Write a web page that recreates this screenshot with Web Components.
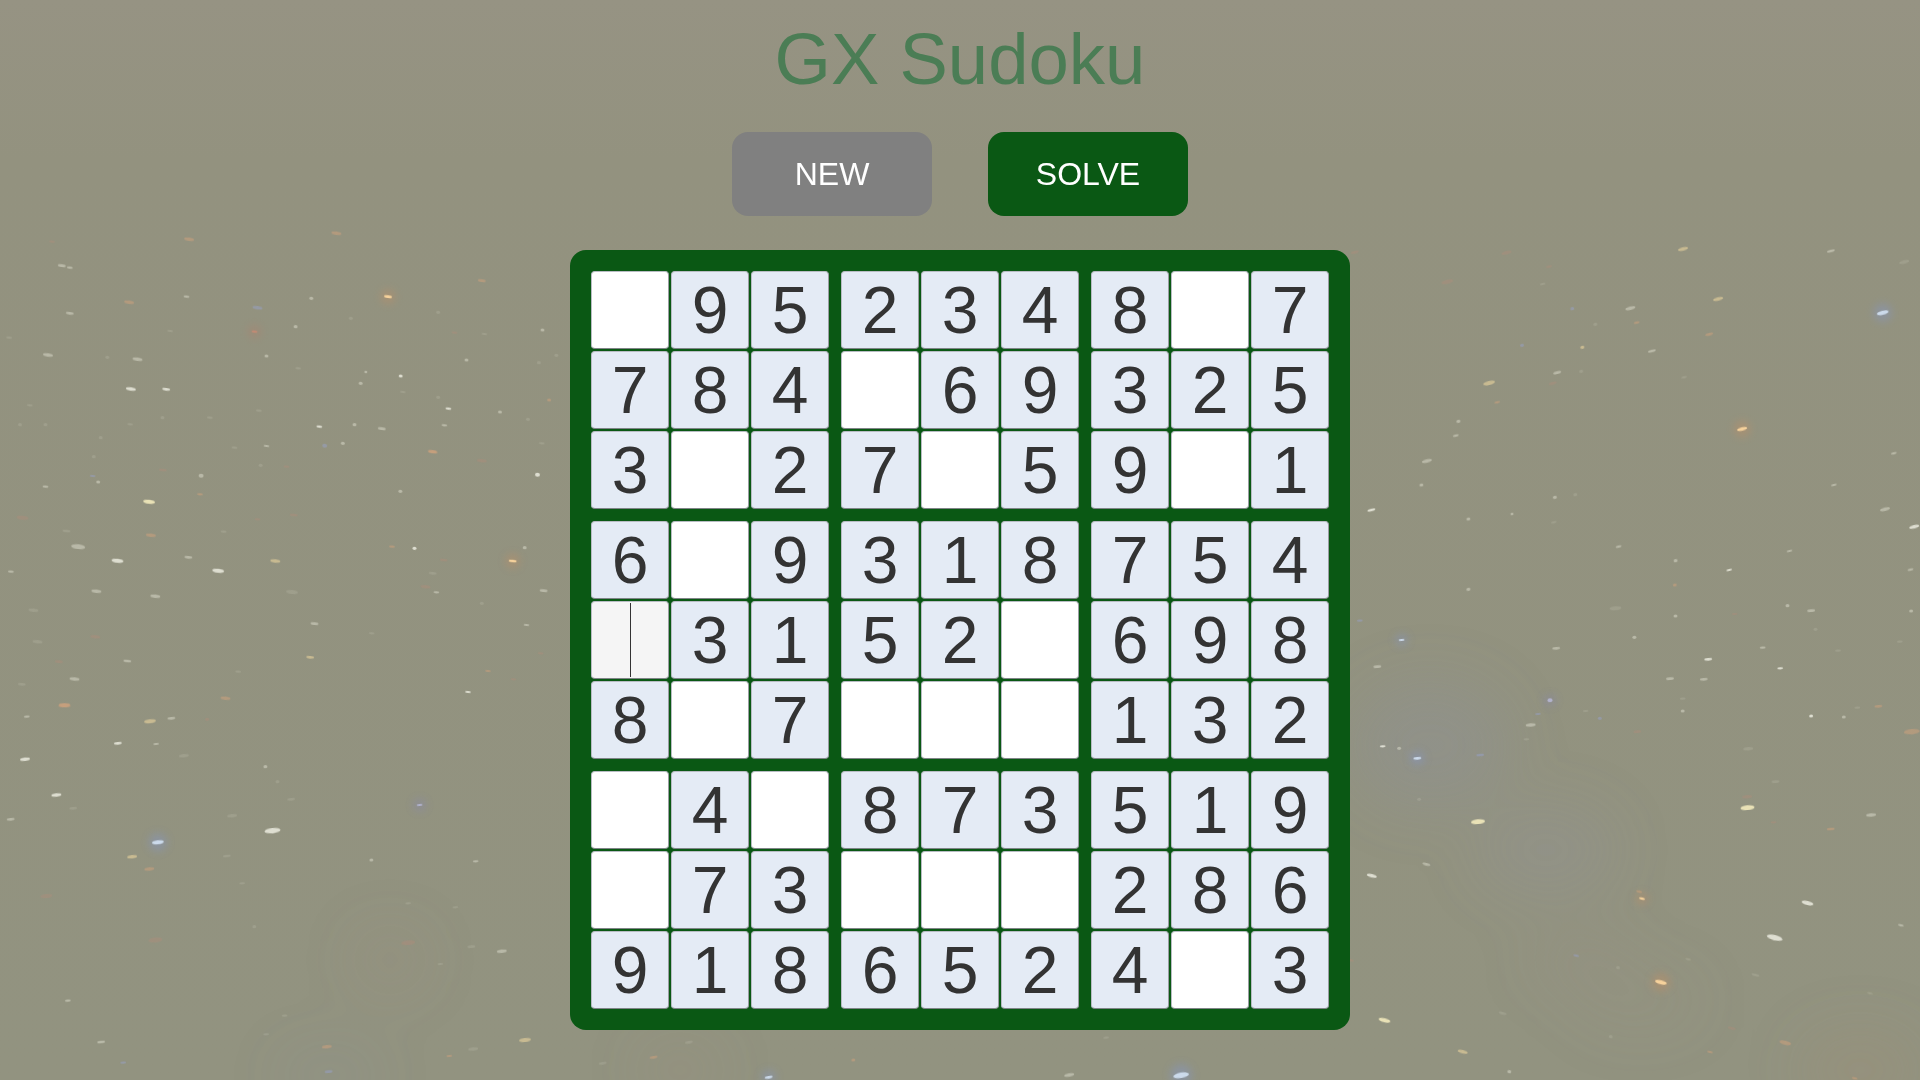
<!DOCTYPE html>
<html lang="en"><head><meta charset="utf-8"><title>GX Sudoku</title>
<style>
html,body{margin:0;height:100%;overflow:hidden}
body{background:#92917f;font-family:"Liberation Sans",Arial,sans-serif}
</style></head>
<body>
<star-field></star-field>
<sudoku-app>
  <game-title>GX Sudoku</game-title>
  <button-bar>
    <game-button tone="grey">NEW</game-button>
    <game-button tone="green">SOLVE</game-button>
  </button-bar>
  <sudoku-board puzzle=".95234 8.7|784.69325|3.27.59.1|6.9318754|_3152.698|8.7...132|.4.873519|.73...286|918652 4.3"></sudoku-board>
</sudoku-app>
<script>
const STARS=[
 [0,200,2.75,3,8,"170,197,w,4 192,203,w,3 520,118,o,5 925,100,o,5 143,125,r,3 355,307,o,5 513,290,w,3 192,340,w,4 708,323,b,5 700,395,G,3 856,295,w,2 1067,290,O,4 1325,242,o,4 813,380,w,2 965,355,f,2 468,393,f,3 132,465,w,5 378,478,w,5 733,468,w,2 295,472,f,2 25,413,f,3 360,567,W,5 457,568,W,4 820,505,f,3 1006,516,w,1.5 1102,528,W,2 992,550,w,2 1108,576,f,3 1205,592,f,2 1233,626,W,3 1375,636,w,2 1510,600,o,2 1492,390,w,2 1283,480,w,2 1482,488,f,2 1530,466,f,2 1332,402,f,3 1205,337,f,2 82,616,f,3 125,674,f,2 55,674,f,2 358,673,f,3 447,653,f,2 577,653,f,3 712,632,f,3 878,680,W,3 975,674,w,2 1050,686,w,4 1222,676,w,3 1452,658,f,2 733,738,w,3 893,737,b,2.5 943,730,w,2 645,743,f,3 1190,755,o,5 277,713,f,2 1250,398,r,3 1490,730,f,3"],
 [0,450,2.75,3,6,"258,20,f,2 270,96,w,2 125,110,w,3 553,77,w,2.5 255,78,b,3 410,155,Y,6 550,133,o,3 62,203,r,6 708,208,r,3 808,195,r,4 183,243,f,4 415,256,o,5 615,245,f,3 215,290,w,7 323,332,W,6 518,322,w,4 757,333,y,5 600,362,W,6 30,365,w,3 265,424,w,5 427,439,w,5 803,426,f,6 92,481,f,5 865,521,w,4 262,560,r,5 103,575,f,5 1022,550,f,3 162,635,r,4 350,633,w,4 853,622,y,4 205,687,w,5 655,665,f,3 60,703,f,4 620,745,o,5 178,766,o,6 1287,726,W,3 1478,74,W,2.5 1101,124,w,2 1190,5,o,4 1325,32,r,5 788,50,r,3 717,46,f,2 1078,290,o,3 1140,295,W,2 1443,293,w,2 1410,333,O,4 1220,330,r,4 1190,370,f,4 1170,410,r,5 1200,427,w,3 1495,422,w,4 1325,460,f,2 1448,525,w,3 1487,610,r,3 1342,663,o,3 1412,688,r,3 448,60,r,4"],
 [0,700,2.8,3,-6,"180,16,o,6 75,50,w,3 420,64,y,6 480,55,w,4 580,58,r,2 330,130,W,4 437,132,w,3 70,178,W,5 515,167,f,5 743,200,w,2 777,245,f,2 158,285,W,5 205,325,f,4 30,358,w,4 650,347,f,5 815,298,f,4 1175,315,P,3 442,427,B,6 763,392,W,8 370,470,y,5 635,468,f,4 418,507,o,5 1040,480,w,2 1332,484,w,3 678,550,f,3 130,588,r,6 435,720,r,7 1143,728,r,7 1320,740,f,4 1405,754,w,5 1233,792,f,3 712,680,f,2 1143,610,f,3 1275,622,f,3 190,902,w,3 283,1026,w,4 797,947,f,3 745,1003,f,3 915,1040,o,5 1325,1047,f,5 1470,1020,y,6 1258,1068,o,3 345,1088,b,3 920,1115,b,4"],
 [1340,200,2.703,3,-14,"927,147,y,5 1327,153,w,4 1525,186,f,5 1022,297,y,5 785,325,w,5 628,326,b,2 802,368,o,3 690,373,f,2 998,403,o,4 1467,338,B,6 655,442,y,2 843,453,w,4 492,436,b,2 587,518,w,4 652,514,f,2 930,532,f,3 403,549,y,6 575,550,r,4 425,607,o,3 548,252,f,3 320,664,w,2 313,707,w,3 1087,687,O,5 1497,760,w,3 235,783,w,5 220,855,w,2 1335,855,w,3 85,930,W,4 581,892,w,2 636,884,f,2 465,942,w,1.5 347,957,w,2 578,967,f,3 1473,928,w,5 1552,980,W,5 1215,1053,w,3 753,1040,w,3 1052,1110,W,3 1542,1109,w,3 347,1168,w,2 907,1082,w,2 905,1155,o,2 290,245,r,6 450,158,r,5 40,157,r,4 565,200,r,3"],
 [1350,590,2.75,3,-5,"27,92,b,3 142,150,B,3 75,230,w,4 567,175,w,4 730,55,f,6 1058,72,r,3 1268,62,w,4 1203,47,w,2 1543,63,w,2 985,208,W,4 1183,235,W,3 880,266,w,4 973,268,w,4 1135,173,w,3 915,326,f,3 915,363,w,2 550,331,P,2.5 517,372,b,3 497,405,w,5 485,448,f,3 648,363,f,3 687,385,b,2 1268,378,W,2 1358,381,w,2 1395,353,f,3 1453,349,o,4 1545,425,o,8 790,425,r,4 90,469,W,3 135,475,w,2 185,505,B,4 358,495,b,4 1095,476,f,5 352,695,Y,7 1093,653,Y,7 1092,620,r,5 1433,675,w,5 1322,717,o,4 1165,697,r,3 1170,575,f,4 190,628,f,2 782,142,w,2 895,78,w,2 1280,118,f,2 1342,182,f,3 1512,155,f,3"],
 [1350,840,2.75,3,14,"60,107,W,5 210,73,w,4 795,155,o,3 803,176,O,3 1258,189,W,6 1168,293,W,8 1515,256,w,3 855,427,O,6 930,358,f,3 1115,405,f,4 737,383,f,2 622,347,b,3 95,541,Y,6 310,635,y,5 420,520,f,4 990,636,o,3 1197,608,o,6 1050,565,r,4 717,590,f,2 1430,460,f,3 1388,715,o,3 0,360,r,4 438,695,w,2"],
 [540,1000,1.867,3,-10,"278,127,f,4 212,172,o,4 117,190,f,4 585,180,o,2 988,225,w,5 1197,226,B,8 427,232,B,4 1057,113,f,3"]
];
const KIND={W:["#fbfbf0",.72],w:["#eeeedf",.42],f:["#dcdccb",.17],Y:["#fff6c4",.8],y:["#f4dba0",.55],O:["#ffd9a0",.9],o:["#e0a67c",.42],r:["#c08a78",.28],B:["#dcecff",.8],b:["#9aa6dc",.4],P:["#cfd0ff",.55],G:["#e08a70",.55]};
const GLOW={O:"#c98f60",G:"#b87a68",B:"#8296d0",P:"#8484c0"};
const SVGNS="http://www.w3.org/2000/svg";
class StarField extends HTMLElement{
  constructor(){super();
    const r=this.attachShadow({mode:"open"});
    const s=`<style>:host{display:block;position:fixed;inset:0;z-index:0;background:linear-gradient(180deg,#969383 0,#93927f 160px,#929380 100%)}
      svg{display:block;width:100%;height:100%}</style>`;
    let b=`<svg xmlns="${SVGNS}" viewBox="0 0 1920 1080" preserveAspectRatio="none" aria-hidden="true"><defs>
      <filter id="s" x="-100%" y="-100%" width="300%" height="300%"><feGaussianBlur stdDeviation=".7"/></filter>
      <filter id="n" x="-100%" y="-100%" width="300%" height="300%"><feGaussianBlur stdDeviation="28"/></filter>
      <filter id="g" x="-200%" y="-200%" width="500%" height="500%"><feGaussianBlur stdDeviation="4.5"/></filter></defs>
      <g filter="url(#n)">
      <ellipse cx="1430" cy="745" rx="80" ry="65" fill="#8a92a8" opacity=".2"/>
      <ellipse cx="1546" cy="850" rx="70" ry="45" fill="#8e90a8" opacity=".18"/>
      <ellipse cx="1580" cy="960" rx="50" ry="30" fill="#9a8a88" opacity=".12"/>
      <ellipse cx="390" cy="960" rx="35" ry="30" fill="#a08a78" opacity=".14"/>
      <ellipse cx="1860" cy="1070" rx="60" ry="40" fill="#a88a70" opacity=".18"/>
      <ellipse cx="680" cy="1070" rx="40" ry="25" fill="#a08a78" opacity=".18"/>
      <ellipse cx="330" cy="1075" rx="50" ry="20" fill="#808ca8" opacity=".16"/>
      <ellipse cx="1640" cy="1000" rx="60" ry="30" fill="#a09080" opacity=".12"/>
      </g>`;
    for(const [ox,oy,sx,sy,ang,list] of STARS){
      for(const t of list.split(" ")){
        const [zx,zy,k,sz]=t.split(",");
        const x=(ox+zx/sx).toFixed(1),y=(oy+zy/sy).toFixed(1),a=+sz;
        const [c,o]=KIND[k];
        if(GLOW[k]) b+=`<circle cx="${x}" cy="${y}" r="${a+3}" fill="${GLOW[k]}" opacity=".4" filter="url(#g)"/>`;
        const ry=a<=2.5?a*.8:Math.max(1.1,a*.34);
        b+=`<ellipse cx="${x}" cy="${y}" rx="${a}" ry="${ry}" fill="${c}" opacity="${o}" filter="url(#s)" transform="rotate(${ang} ${x} ${y})"/>`;
      }
    }
    r.innerHTML=s+b+"</svg>";
  }
}
customElements.define("star-field",StarField);

class SudokuApp extends HTMLElement{
  constructor(){super();this.attachShadow({mode:"open"}).innerHTML=`<style>
    :host{display:flex;flex-direction:column;align-items:center;position:relative;z-index:1;padding-top:17px;font-family:"Liberation Sans",Arial,sans-serif}
  </style><slot></slot>`;}
}
customElements.define("sudoku-app",SudokuApp);

class GameTitle extends HTMLElement{
  constructor(){super();this.attachShadow({mode:"open"}).innerHTML=`<style>
    :host{display:block;font-size:72.5px;line-height:83px;color:#4b7d55;text-align:center}
  </style><slot></slot>`;}
}
customElements.define("game-title",GameTitle);

class ButtonBar extends HTMLElement{
  constructor(){super();this.attachShadow({mode:"open"}).innerHTML=`<style>
    :host{display:flex;gap:56px;margin-top:32px}
  </style><slot></slot>`;}
}
customElements.define("button-bar",ButtonBar);

class GameButton extends HTMLElement{
  constructor(){super();this.attachShadow({mode:"open"}).innerHTML=`<style>
    :host{display:flex;align-items:center;justify-content:center;width:200px;height:84px;border-radius:16px;font-size:32px;color:#fff;background:#808080}
    :host([tone=green]){background:#0a5814}
  </style><slot></slot>`;}
}
customElements.define("game-button",GameButton);

class SudokuCell extends HTMLElement{
  constructor(){super();this.attachShadow({mode:"open"}).innerHTML=`<style>
    :host{display:block;width:80px;height:80px;padding:1px;box-sizing:border-box}
    .c{box-sizing:border-box;width:78px;height:78px;border-radius:4px;border:1px solid #b9bcc4;border-bottom-color:#808488;border-right-color:#9a9ca2;
       display:flex;align-items:center;justify-content:center;position:relative;background:#fff;color:#333;font-size:66px;line-height:1}
    :host([given]) .c{background:#e4ebf5}
    :host([focused]) .c{background:#f5f5f5}
    .caret{display:none;position:absolute;left:38px;top:1px;bottom:1px;width:1px;background:#333}
    :host([focused]) .caret{display:block}
  </style><div class="c"><slot></slot><i class="caret"></i></div>`;}
}
customElements.define("sudoku-cell",SudokuCell);

class SudokuBoard extends HTMLElement{
  constructor(){super();this.attachShadow({mode:"open"}).innerHTML=`<style>
    :host{display:grid;grid-template-columns:repeat(3,240px);gap:10px;padding:20px;margin-top:34px;background:#0a5814;border-radius:16px}
    .b{display:grid;grid-template-columns:repeat(3,80px)}
  </style>`;}
  connectedCallback(){
    const rows=this.getAttribute("puzzle").replace(/ /g,"").split("|");
    for(let br=0;br<3;br++)for(let bc=0;bc<3;bc++){
      const box=document.createElement("div");box.className="b";
      for(let r=0;r<3;r++)for(let c=0;c<3;c++){
        const ch=rows[br*3+r][bc*3+c],cell=document.createElement("sudoku-cell");
        if(ch==="_")cell.setAttribute("focused","");
        else if(ch!=="."){cell.setAttribute("given","");cell.textContent=ch;}
        box.appendChild(cell);
      }
      this.shadowRoot.appendChild(box);
    }
  }
}
customElements.define("sudoku-board",SudokuBoard);
</script>
</body></html>
